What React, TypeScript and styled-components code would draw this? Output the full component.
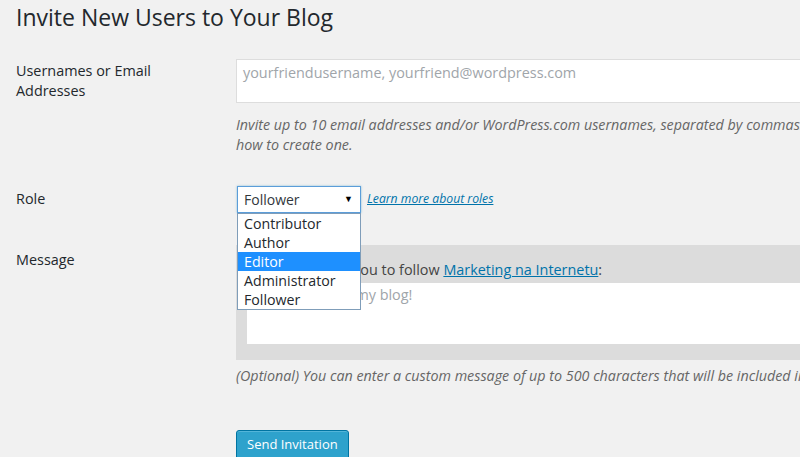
import styled, {createGlobalStyle} from "styled-components";
import React, {useState} from "react";

const GlobalStyle = createGlobalStyle`
  html, body {
    margin: 0;
    padding: 0;
    background: #f1f1f1;
    overflow: hidden;
  }
  body {
    font-family: "Open Sans", "Noto Sans", sans-serif;
    color: #23282d;
  }
`;

const Page = styled.div`
  width: 1220px;
  padding: 0 0 0 16px;
`;

const Title = styled.h2`
  margin: 0;
  padding-top: 3px;
  font-size: 23px;
  font-weight: 400;
  line-height: 29px;
  color: #23282d;
`;

const Form = styled.form`
  display: grid;
  grid-template-columns: 220px 1fr;
  margin-top: 27px;
`;

const Label = styled.label<{ $top: number }>`
  font-size: 14.4px;
  line-height: 19.5px;
  padding-top: ${(p) => p.$top}px;
  width: 180px;
`;

const Field = styled.div<{ $bottom: number }>`
  padding-bottom: ${(p) => p.$bottom}px;
  position: relative;
`;

const Recipients = styled.textarea`
  display: block;
  box-sizing: border-box;
  width: 100%;
  height: 44px;
  margin: 0;
  padding: 3px 6px;
  border: 1px solid #ddd;
  background: #fff;
  resize: none;
  outline: none;
  font-family: inherit;
  font-size: 14.4px;
  line-height: 20px;
  color: #32373c;
  &::placeholder {
    color: #a0a5aa;
  }
`;

const Hint = styled.p<{ $top: number }>`
  margin: ${(p) => p.$top}px 0 0;
  font-size: 14.3px;
  font-style: italic;
  line-height: 20px;
  color: #666;
  width: 935px;
`;

const RoleLine = styled.div`
  display: flex;
  align-items: center;
  gap: 6px;
  padding-left: 1px;
`;

const SelectBox = styled.div`
  box-sizing: border-box;
  width: 124px;
  height: 27px;
  display: flex;
  align-items: center;
  justify-content: space-between;
  padding: 0 7px 0 6px;
  background: #fff;
  border: 1px solid #5b9dd9;
  box-shadow: 0 0 2px rgba(30, 140, 190, 0.5);
  font-size: 14px;
  color: #32373c;
  cursor: default;
`;

const Arrow = styled.span`
  font-size: 9px;
  color: #000;
  margin-top: -2px;
`;

const RoleLink = styled.a`
  font-size: 12.2px;
  font-style: italic;
  color: #0073aa;
  text-decoration: underline;
  margin-top: -2px;
`;

const Options = styled.ul`
  position: absolute;
  top: 27px;
  left: 1px;
  z-index: 5;
  box-sizing: border-box;
  width: 124px;
  margin: 0;
  padding: 0;
  list-style: none;
  background: #fff;
  border: 1px solid #7f9db9;
`;

const Option = styled.li<{ $active: boolean }>`
  height: 19px;
  line-height: 19px;
  padding-left: 6px;
  font-size: 14.2px;
  color: ${(p) => (p.$active ? "#fff" : "#23282d")};
  background: ${(p) => (p.$active ? "#1e90ff" : "transparent")};
`;

const MessageBox = styled.div`
  background: #dcdcdc;
  padding: 15px 0 16px 11px;
`;

const Intro = styled.div`
  font-size: 14.4px;
  line-height: 20px;
  color: #444;
  margin-bottom: 3px;
`;

const IntroLink = styled.a`
  color: #0073aa;
  text-decoration: underline;
`;

const MessageInput = styled.textarea`
  display: block;
  box-sizing: border-box;
  width: 100%;
  height: 61px;
  margin: 0;
  padding: 2px 6px;
  border: none;
  background: #fff;
  resize: none;
  outline: none;
  font-family: inherit;
  font-size: 14.4px;
  line-height: 20px;
  &::placeholder {
    color: #a0a5aa;
  }
`;

const SubmitButton = styled.button`
  box-sizing: border-box;
  height: 30px;
  padding: 0 10px 2px;
  margin-top: 44px;
  background: #2ea2cc;
  border: 1px solid #0074a2;
  border-radius: 3px;
  box-shadow: inset 0 1px 0 rgba(120, 200, 230, 0.5);
  color: #fff;
  font-family: inherit;
  font-size: 13px;
  cursor: pointer;
`;

const roles = ["Contributor", "Author", "Editor", "Administrator", "Follower"];

const App: React.FC = () => {
  const [role, setRole] = useState<string>("Follower");
  const [hover, setHover] = useState<string>("Editor");

  return (
    <Page>
      <GlobalStyle/>
      <Title>Invite New Users to Your Blog</Title>
      <Form onSubmit={(e) => e.preventDefault()}>
        <Label htmlFor="recipients" $top={2}>Usernames or Email Addresses</Label>
        <Field $bottom={31}>
          <Recipients
            id="recipients"
            placeholder="yourfriendusername, yourfriend@wordpress.com"
          />
          <Hint $top={12}>
            Invite up to 10 email addresses and/or WordPress.com usernames, separated by commas. Those needing a
            username will be sent instructions on how to create one.
          </Hint>
        </Field>

        <Label $top={3}>Role</Label>
        <Field $bottom={32}>
          <RoleLine>
            <SelectBox>
              {role}
              <Arrow>&#9660;</Arrow>
            </SelectBox>
            <RoleLink href="#">Learn more about roles</RoleLink>
          </RoleLine>
          <Options>
            {roles.map((r) => (
              <Option
                key={r}
                $active={r === hover}
                onMouseEnter={() => setHover(r)}
                onClick={() => setRole(r)}
              >
                {r}
              </Option>
            ))}
          </Options>
        </Field>

        <Label htmlFor="message" $top={5}>Message</Label>
        <Field $bottom={0}>
          <MessageBox>
            <Intro>
              Ana has invited you to follow <IntroLink href="#">Marketing na Internetu</IntroLink>:
            </Intro>
            <MessageInput id="message" placeholder="Come and visit my blog!"/>
          </MessageBox>
          <Hint $top={6}>
            (Optional) You can enter a custom message of up to 500 characters that will be included in the invitation
            to the user(s).
          </Hint>
          <SubmitButton type="submit">Send Invitation</SubmitButton>
        </Field>
      </Form>
    </Page>
  );
};

export default App;
